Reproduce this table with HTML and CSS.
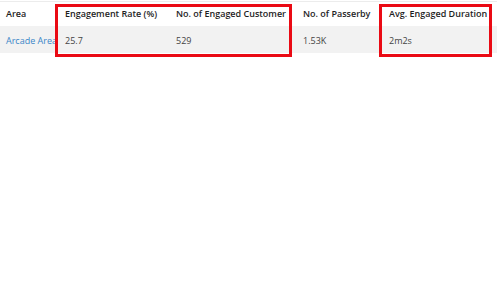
FILE: index.html
```html
<!DOCTYPE html>
<html>
<head>
<meta charset="utf-8">
<link rel="stylesheet" href="styles.css">
</head>
<body>
<div class="wrap">
  <table class="grid">
    <colgroup>
      <col class="c-area">
      <col class="c-rate">
      <col class="c-cust">
      <col class="c-pass">
      <col class="c-dur">
    </colgroup>
    <thead>
      <tr>
        <th>Area</th>
        <th>Engagement Rate (%)</th>
        <th>No. of Engaged Customer</th>
        <th>No. of Passerby</th>
        <th>Avg. Engaged Duration</th>
      </tr>
    </thead>
    <tbody>
      <tr>
        <td><a href="#" class="link">Arcade Area</a></td>
        <td>25.7</td>
        <td>529</td>
        <td>1.53K</td>
        <td>2m2s</td>
      </tr>
    </tbody>
  </table>
  <div class="mark mark-a"></div>
  <div class="mark mark-b"></div>
</div>
</body>
</html>
```
FILE: styles.css
```css
html, body {
  margin: 0;
  padding: 0;
  background: #ffffff;
}
body {
  font-family: "Open Sans", "Noto Sans", sans-serif;
  font-size: 9px;
  color: #333333;
}
.wrap {
  position: relative;
  width: 497px;
  padding-top: 1px;
  padding-bottom: 8px;
}
.grid {
  width: 497px;
  border-collapse: collapse;
  table-layout: fixed;
  border-top: 1px solid #ececec;
}
.c-area { width: 57px; }
.c-rate { width: 111px; }
.c-cust { width: 127px; }
.c-pass { width: 86px; }
.c-dur { width: 116px; }
.grid th {
  text-align: left;
  font-weight: 600;
  color: #1e1e1e;
  height: 23px;
  padding: 0 0 1px 8px;
  white-space: nowrap;
  overflow: hidden;
}
.grid th:first-child,
.grid td:first-child {
  padding-left: 6px;
}
.grid td {
  height: 26px;
  padding: 1px 0 0 8px;
  background: #f2f2f2;
  white-space: nowrap;
  overflow: hidden;
  color: #444444;
}
.link {
  color: #3a86c8;
  text-decoration: none;
}
.mark {
  position: absolute;
  top: 4px;
  left: 0;
  height: 47px;
  border: 3px solid #ea0a14;
  box-sizing: content-box;
}
.mark-a { left: 55px; width: 231px; }
.mark-b { left: 379px; width: 107px; }
```
